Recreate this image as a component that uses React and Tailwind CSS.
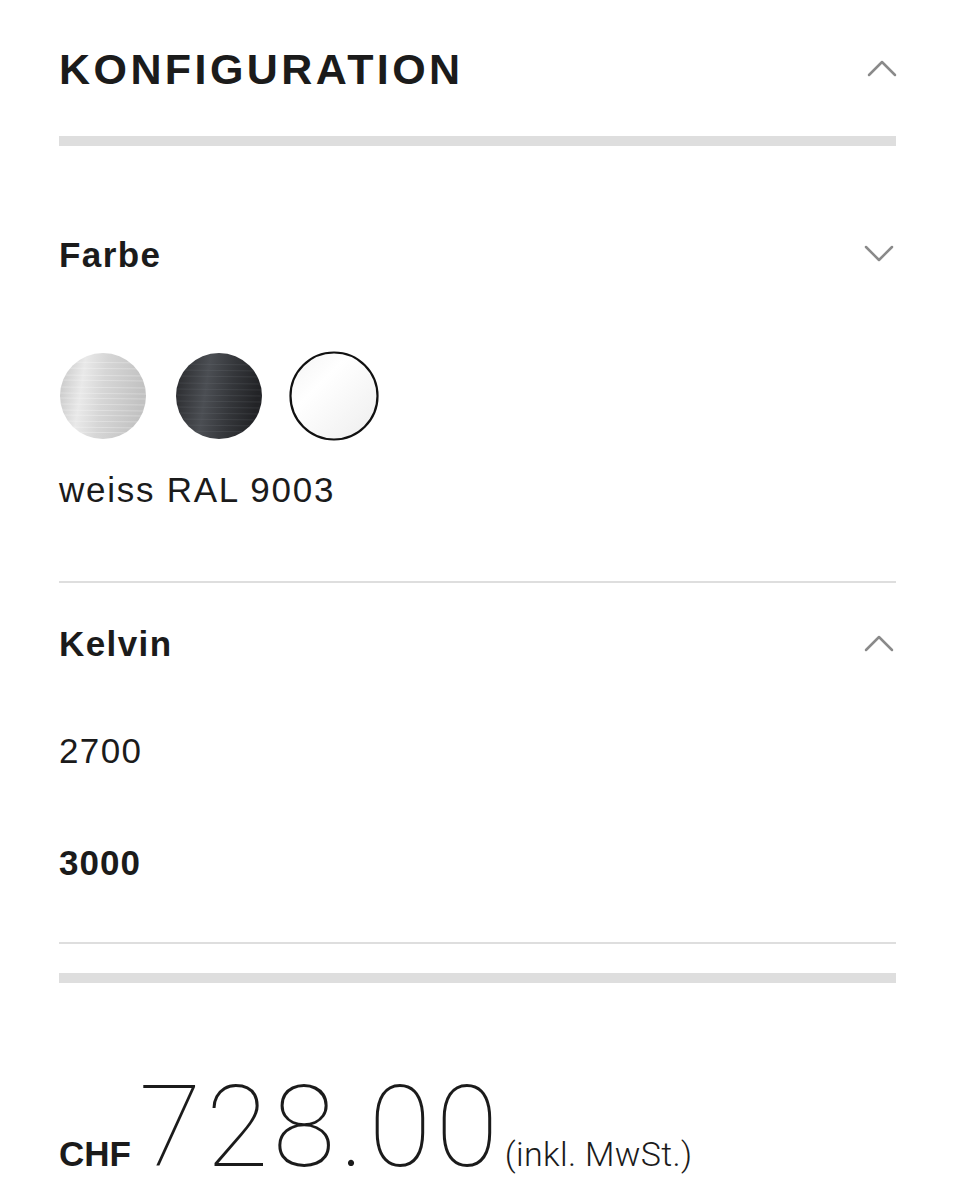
import React from "react";

function Chevron({ up }) {
  return (
    <svg width="30" height="18" viewBox="0 0 30 18" className="block">
      <polyline
        points={up ? "2,16 15,3 28,16" : "2,2 15,15 28,2"}
        fill="none"
        stroke="#8a8a8a"
        strokeWidth="2.5"
        strokeLinecap="round"
        strokeLinejoin="round"
      />
    </svg>
  );
}

function Swatch({ kind }) {
  if (kind === "silver") {
    return (
      <svg width="86" height="86" viewBox="0 0 86 86" className="block">
        <defs>
          <linearGradient id="sg" x1="0" y1="0" x2="1" y2="0.15">
            <stop offset="0" stopColor="#c4c4c4" />
            <stop offset="0.3" stopColor="#e9e9e9" />
            <stop offset="0.55" stopColor="#d6d6d6" />
            <stop offset="1" stopColor="#c2c2c2" />
          </linearGradient>
          <clipPath id="sc"><circle cx="43" cy="43" r="43" /></clipPath>
        </defs>
        <circle cx="43" cy="43" r="43" fill="url(#sg)" />
        <g clipPath="url(#sc)" stroke="#ffffff" strokeOpacity="0.28" strokeWidth="1">
          {[9, 15, 22, 27, 34, 40, 45, 51, 57, 62, 68, 74, 79].map((y) => (
            <line key={y} x1="0" y1={y} x2="86" y2={y + 1} />
          ))}
        </g>
      </svg>
    );
  }
  if (kind === "dark") {
    return (
      <svg width="86" height="86" viewBox="0 0 86 86" className="block">
        <defs>
          <linearGradient id="dg" x1="0" y1="0" x2="1" y2="0.15">
            <stop offset="0" stopColor="#28292c" />
            <stop offset="0.4" stopColor="#4b4e53" />
            <stop offset="0.7" stopColor="#34363a" />
            <stop offset="1" stopColor="#222326" />
          </linearGradient>
          <clipPath id="dc"><circle cx="43" cy="43" r="43" /></clipPath>
        </defs>
        <circle cx="43" cy="43" r="43" fill="url(#dg)" />
        <g clipPath="url(#dc)" stroke="#7a7d82" strokeOpacity="0.2" strokeWidth="1">
          {[11, 17, 23, 30, 36, 42, 48, 54, 60, 66, 72, 78].map((y) => (
            <line key={y} x1="0" y1={y} x2="86" y2={y + 1} />
          ))}
        </g>
      </svg>
    );
  }
  return (
    <svg width="90" height="90" viewBox="0 0 90 90" className="block">
      <defs>
        <linearGradient id="wg" x1="0" y1="0" x2="1" y2="1">
          <stop offset="0" stopColor="#f3f3f3" />
          <stop offset="0.35" stopColor="#ffffff" />
          <stop offset="1" stopColor="#ededed" />
        </linearGradient>
      </defs>
      <circle cx="45" cy="45" r="43.5" fill="url(#wg)" stroke="#111" strokeWidth="2.2" />
    </svg>
  );
}

export default function App() {
  return (
    <div className="min-h-[1200px] bg-white text-[#1b1b1b] font-['Liberation_Sans','Arial',sans-serif]">
      <div className="pl-[59px] pr-[59px]">
        {/* Header */}
        <div className="flex h-[136px] items-center justify-between">
          <h1 className="text-[43px] font-bold tracking-[0.08em] leading-none mt-[2px]">KONFIGURATION</h1>
          <div className="mr-[-1px]"><Chevron up /></div>
        </div>
        <div className="h-[10px] bg-[#dedede]" />

        {/* Farbe */}
        <div className="flex h-[200px] items-center justify-between pt-[16px]">
          <div className="text-[35px] font-bold leading-none tracking-[0.04em]">Farbe</div>
          <div className="mr-[2px]"><Chevron /></div>
        </div>
        <div className="mt-[5px] flex items-center">
          <div className="ml-[1px]"><Swatch kind="silver" /></div>
          <div className="ml-[30px]"><Swatch kind="dark" /></div>
          <div className="ml-[27px]"><Swatch kind="white" /></div>
        </div>
        <div className="mt-[31px] text-[35px] leading-none tracking-[0.05em]">weiss RAL 9003</div>
        <div className="mt-[74px] h-[2px] bg-[#dedede]" />

        {/* Kelvin */}
        <div className="flex h-[120px] items-center justify-between">
          <div className="text-[35px] font-bold leading-none tracking-[0.04em]">Kelvin</div>
          <div className="mr-[2px]"><Chevron up /></div>
        </div>
        <div className="mt-[30px] text-[35px] leading-none tracking-[0.04em]">2700</div>
        <div className="mt-[77px] text-[35px] font-bold leading-none tracking-[0.03em]">3000</div>
        <div className="mt-[62px] h-[2px] bg-[#dedede]" />
        <div className="mt-[29px] h-[10px] bg-[#dedede]" />

        {/* Price */}
        <div className="mt-[87px] flex items-baseline">
          <span className="text-[35px] font-bold leading-none">CHF</span>
          <span className="ml-[8px] text-[114px] font-thin leading-none tracking-[0.04em] font-['Roboto',sans-serif]">728.00</span>
          <span className="ml-[2px] text-[34px] font-light leading-none tracking-[0.01em] font-['Roboto',sans-serif]">(inkl. MwSt.)</span>
        </div>
      </div>
    </div>
  );
}
